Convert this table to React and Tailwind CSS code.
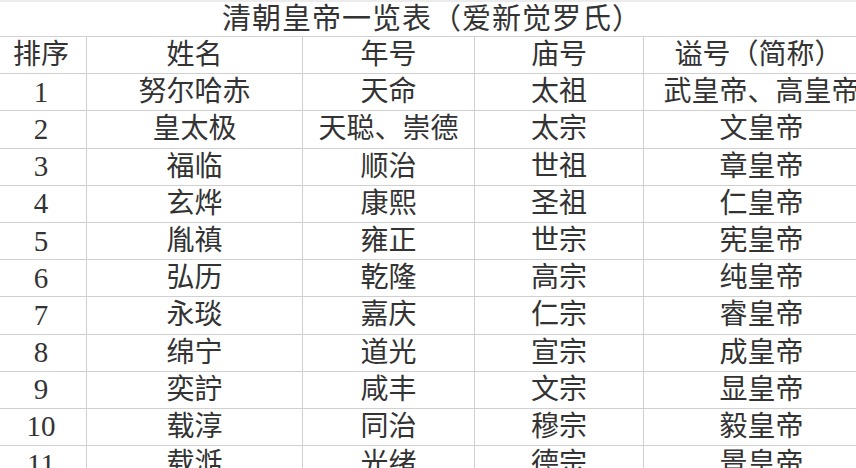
import React from 'react';

const rows = [
  ['1', '努尔哈赤', '天命', '太祖', '武皇帝、高皇帝'],
  ['2', '皇太极', '天聪、崇德', '太宗', '文皇帝'],
  ['3', '福临', '顺治', '世祖', '章皇帝'],
  ['4', '玄烨', '康熙', '圣祖', '仁皇帝'],
  ['5', '胤禛', '雍正', '世宗', '宪皇帝'],
  ['6', '弘历', '乾隆', '高宗', '纯皇帝'],
  ['7', '永琰', '嘉庆', '仁宗', '睿皇帝'],
  ['8', '绵宁', '道光', '宣宗', '成皇帝'],
  ['9', '奕詝', '咸丰', '文宗', '显皇帝'],
  ['10', '载淳', '同治', '穆宗', '毅皇帝'],
  ['11', '载湉', '光绪', '德宗', '景皇帝'],
];

const cols = ['w-[87px]', 'w-[216px]', 'w-[172px]', 'w-[169px]', 'w-[230px]'];

const cjk = { fontFamily: '"Liberation Serif", "Noto Sans CJK SC", serif' };

const Row = ({ cells, header }) => (
  <div className="flex h-[37.2px] shrink-0 border-t border-[#d0d0d0]">
    {cells.map((c, i) => (
      <div
        key={i}
        className={`${cols[i]} shrink-0 flex items-center justify-center border-r border-[#d0d0d0] whitespace-nowrap ${i === 0 ? 'pr-1' : ''} ${i === 4 && !header ? 'pl-[6px]' : ''}`}
      >
        <span className={i === 0 && !header ? 'text-[29px] leading-none' : 'text-[28px] leading-none'}>{c}</span>
      </div>
    ))}
  </div>
);

export default function App() {
  return (
    <div className="w-[856px] h-[468px] overflow-hidden bg-white text-[#333333]" style={cjk}>
      <div className="h-[36px] border-t-2 border-[#ececec] flex items-center justify-center">
        <span className="text-[29px] leading-none tracking-[1px] pl-[8px]">清朝皇帝一览表（爱新觉罗氏）</span>
      </div>
      <div className="flex flex-col w-[874px]">
        <Row header cells={['排序', '姓名', '年号', '庙号', '谥号（简称）']} />
        {rows.map((r) => (
          <Row key={r[0]} cells={r} />
        ))}
      </div>
    </div>
  );
}
